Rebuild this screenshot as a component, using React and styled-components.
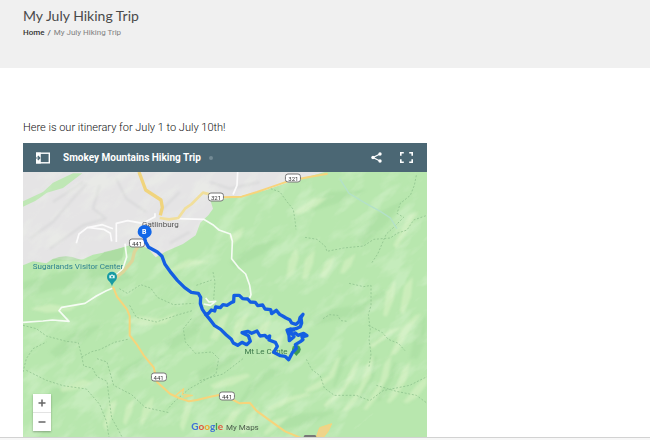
import React, { useState } from "react";
import styled, { createGlobalStyle } from "styled-components";

const MAP_W = 1212;
const MAP_H = 795;

const GlobalStyle = createGlobalStyle`
  * { box-sizing: border-box; }
  body {
    margin: 0;
    background: #fff;
    color: #3c3c3c;
    font-family: Roboto, "Liberation Sans", sans-serif;
  }
`;

const PageHeader = styled.header`
  background: #f0f0f0;
  padding: 8px 23px 27px;
`;

const PageTitle = styled.h1`
  margin: 0;
  font-family: Lato, "Open Sans", sans-serif;
  font-size: 14px;
  font-weight: 400;
  line-height: 16px;
  color: #4a4a4a;
`;

const Breadcrumb = styled.nav`
  display: flex;
  gap: 3px;
  padding-top: 1px;
  font-size: 8px;
  line-height: 16px;
  color: #808080;
`;

const HomeLink = styled.a`
  color: #333;
  font-weight: 500;
  text-decoration: none;
`;

const Slash = styled.span`
  color: #333;
`;

const Content = styled.main`
  display: grid;
  grid-template-columns: minmax(0, 101fr) minmax(0, 50fr);
  padding: 52px 23px 0;
`;

const Intro = styled.p`
  margin: 0;
  padding-bottom: 7px;
  font-size: 11px;
  font-weight: 300;
  line-height: 16px;
  color: #111;
`;

const Toolbar = styled.div`
  display: flex;
  align-items: center;
  height: 29px;
  padding: 0 14px 0 13px;
  background: #4b6774;
  color: #fff;
`;

const ToolButton = styled.button`
  display: flex;
  padding: 0;
  border: 0;
  background: none;
  color: inherit;
  cursor: pointer;
`;

const MapTitle = styled.h2`
  flex: 1;
  display: flex;
  align-items: center;
  gap: 8px;
  margin: 0 13px;
  font-size: 10px;
  font-weight: 700;
  line-height: 16px;
`;

const TitleDot = styled.span`
  width: 4px;
  height: 4px;
  border-radius: 50%;
  background: #738a94;
`;

const ToolActions = styled.div`
  display: flex;
  align-items: center;
  gap: 18px;
`;

const MapView = styled.div`
  position: relative;
  overflow: hidden;
  background: #b9e8af;
`;

const Terrain = styled.svg`
  display: block;
  width: 100%;
`;

const Overlay = styled.svg`
  position: absolute;
  inset: 0;
  width: 100%;
  height: 100%;
`;

const Place = styled.span`
  position: absolute;
  left: ${(prop) => (prop.$x / MAP_W) * 100}%;
  top: ${(prop) => (prop.$y / MAP_H) * 100}%;
  transform: translate(-50%, -50%);
  font-size: ${(prop) => prop.$size || 8}px;
  line-height: 12px;
  white-space: nowrap;
  color: ${(prop) => prop.$color};
`;

const Shield = styled(Place)`
  padding: 0 2px;
  border: 1px solid #777;
  border-radius: 3px;
  background: #fff;
  color: #333;
  font-size: 6px;
  line-height: 7px;
`;

const ZoomControl = styled.div`
  position: absolute;
  left: 10px;
  bottom: 6px;
  display: flex;
  flex-direction: column;
  background: #fff;
  box-shadow: 0 1px 2px rgba(0, 0, 0, 0.3);
`;

const ZoomButton = styled.button`
  display: flex;
  align-items: center;
  justify-content: center;
  width: 18px;
  height: 18px;
  padding: 0;
  border: 0;
  background: #fff;
  color: #666;
  cursor: pointer;

  & + & {
    height: 19px;
    border-top: 1px solid #e3e3e3;
  }
`;

const Attribution = styled.a`
  position: absolute;
  left: 50%;
  bottom: 2px;
  display: flex;
  align-items: baseline;
  gap: 3px;
  transform: translateX(-50%);
  font-size: 8px;
  line-height: 14px;
  white-space: nowrap;
  text-decoration: none;
  color: #4c5c4c;
`;

const GoogleWord = styled.span`
  font-family: Lato, sans-serif;
  font-size: 10px;
  font-weight: 700;
`;

const Letter = styled.span`
  color: ${(prop) => prop.$color};
`;

const BottomEdge = styled.footer`
  height: 3px;
  border-top: 1px solid #d2d2d2;
  background: #f7f7f7;
`;

const googleLetters = [
  ["G", "#3f72d6"],
  ["o", "#e0533f"],
  ["o", "#eba52d"],
  ["g", "#3f72d6"],
  ["l", "#3f9e52"],
  ["e", "#e0533f"],
];

const shields = [
  { x: 579, y: 75, label: "321" },
  { x: 811, y: 17, label: "321" },
  { x: 342, y: 213, label: "441" },
  { x: 407, y: 614, label: "441" },
  { x: 612, y: 671, label: "441" },
];

// light slopes facing north-west
const litRidges = [
  "M790 320l6-54 24-40 8 30-16 50z",
  "M836 322l10-60 30-30-6 44-18 44z",
  "M890 316l16-44 30-22-10 36-20 30z",
  "M950 304l14-38 34-22-14 38-20 22z",
  "M560 500l30-60 30-22-18 50-20 36z",
  "M624 510l14-60 40-30-22 60-18 32z",
  "M690 500l26-44 30-10-20 40-22 18z",
  "M735 560l20-60 30-18-16 44-20 32z",
  "M845 652l72-42 22-50 14-6-20 60-46 36-36 12z",
  "M900 700l60-54 30-66 20-20-18 60-42 52-40 34z",
  "M960 715l50-70 20-66 22-30-10 66-40 70-32 34z",
  "M1020 712l50-80 14-58 22-26-10 66-36 64-28 36z",
  "M1090 690l30-50 20-50 22-24-12 58-30 50-20 20z",
  "M1140 690l40-50 32-30v26l-30 40-30 18z",
  "M1100 550l36-80 40-40 20-6-36 50-40 72z",
  "M1080 430l10-70 28-36-6 60-20 50z",
  "M1130 420l14-80 26-26-6 60-22 52z",
  "M730 710l60-34 62-14 10 8-60 20-60 26z",
  "M560 640l48-22 64-14 10 8-54 28-56 10z",
  "M590 770l38-52 30-12-26 46-34 26z",
  "M650 780l24-50 36-30-20 50-30 34z",
  "M720 785l30-40 50-14-40 38-30 20z",
  "M240 760l18-66 24-12-8 36-24 60z",
  "M300 750l10-50 24-20-6 40-20 40z",
  "M350 752l12-50 30-30-4 38-30 50z",
  "M470 760l20-74 24-16-12 50-22 60z",
  "M1110 220l48-92 28-8-30 50-34 60z",
  "M20 410l62-14 56 10 42-18-38 28-72 6z",
  "M300 450l46-18 70 8 50-22-38 36-66 8z",
  "M430 296l66-34 70 6-60 14-60 20z",
  "M810 120l60-40 42-2-30 24-56 26z",
  "M620 190l44-26-10 30-26 26z",
  "M110 650l70-28 28 10-30 16-60 12z",
  "M1040 520l60-46 42-12-54 34-40 34z",
];

const shadeRidges = [
  "M0 330l110-30 160-24 60 40-92 28-128 6-110 26z",
  "M870 440l60-30 88-12 60-46 10 14-56 54-82 22-76 16z",
  "M930 640l24-80 18-14-14 50-24 52z",
  "M1000 690l34-70 20-68 8 0-8 62-36 64z",
  "M1060 690l30-70 24-50 8 4-14 50-34 60z",
  "M1160 560l20-100 30-30v70l-26 60z",
  "M640 700l40-60 60-50 40 6-56 34-66 66z",
  "M420 510l80-50 40-62 26 6-38 74-80 54z",
  "M80 540l70-60 90-24-60 52-78 50z",
  "M520 600l70-40 76-16-60 38-74 42z",
  "M620 270l70-50 80-20-50 46-84 42z",
  "M1000 200l60-74 82-42-50 70-72 68z",
  "M40 700l52-50 62-12-38 44-50 44z",
  "M280 600l72-42 80-8-64 40-80 30z",
  "M740 760l90-34 108-10-60 34-108 24z",
  "M850 100l70-40 110-6-70 34-92 30z",
];

// dotted hiking paths
const footpaths = [
  "M743 50l28 10 20 28 20 24 6 40 2 20",
  "M846 196l36 6 24 20 6 16 50-10 60-6 30-20 50-4 20-14 30-10 20-30 40-14 18-20-8-30 30-20-6-28",
  "M1180 10l-6 30-12 30-30 24-10 30 20 12-30 30-22 20-26 60-20 30",
  "M978 334l44 10 22-4 0 60-8 28 6 44-4 30 6 44-6 38",
  "M1036 460l40 20 20 22 30 12 20 22",
  "M0 460l40 10 30 22 60 16 36 4 10 40 6 30 26 6 14 26 30 14 10 80 4 30 16 28 26 50 6 49",
  "M0 600l10-40 20-30 40-20M10 595l60 30 50 16 70 10 40 46 20 50 8 48",
  "M176 555l30-16 24-6 44-22 44-10M222 560l30 10 20 70 54 28 40 38 72 16",
  "M289 350l24 14 40-26 30 10 20 28 48 22 60-4M320 400l20 36 60 14 60-20 48-14",
  "M505 440l-24 30 6 40 30 34 50-4 20 20-8 46-80 44-46 40-20 22",
  "M660 560l-60 46-70 20M850 562l16 30 26 20 12 36 30 22 66 0 40 16 40-30 80-16 60-30",
  "M900 440l20-12 24 2 10 16 20 2M1060 640l60 18 60 12 41 30",
  "M570 300l6 30-4 50 8 24M520 340l46-16",
];

const routePath =
  "M364 196L368 210L377 226L403 240L417 253L426 277L444 302L463 325L485 347L505 361L526 364L533 376L532 395L538 412L548 427L561 443L575 461L593 472L610 489L625 502L631 513L644 520L657 511L671 518L682 508L676 491L657 482L674 478L686 484L702 477L711 492L726 490L732 497L740 492L738 504L757 511L763 523L752 541L772 551L786 553L797 563L808 542L820 529L817 518L832 509L840 503L837 495L852 491L842 484L825 490L817 483L809 488L800 477L812 474L802 471L792 474L798 490L799 506L813 494";

const northLoop =
  "M548 427L557 424L565 414L575 417L578 405L592 407L600 398L612 400L626 391L632 389L633 370L649 370L659 380L674 381L682 390L697 391L704 401L719 399L726 411L743 413L746 425L760 415L770 427L779 432L789 438L800 443L806 453L819 457L828 449L831 437L840 427L834 437L836 453L832 464L819 470L803 472";

function PanelIcon() {
  return (
    <svg width="14" height="12" viewBox="0 0 14 12" aria-hidden="true">
      <rect x="0.7" y="1.2" width="12.6" height="9.6" fill="none" stroke="currentColor" strokeWidth="1.4" />
      <path d="M0 .5h4.8v11H0z" fill="currentColor" />
      <path d="M0 6h3.4M1.8 4l2 2-2 2" fill="none" stroke="#4b6774" strokeWidth="1.2" />
    </svg>
  );
}

function ShareIcon() {
  return (
    <svg width="11" height="11" viewBox="0 0 11 11" aria-hidden="true">
      <path d="M9 2L2 5.5 9 9" fill="none" stroke="currentColor" strokeWidth="1.2" />
      <circle cx="9" cy="2" r="1.7" fill="currentColor" />
      <circle cx="2" cy="5.5" r="1.7" fill="currentColor" />
      <circle cx="9" cy="9" r="1.7" fill="currentColor" />
    </svg>
  );
}

function FullscreenIcon() {
  return (
    <svg width="13" height="11" viewBox="0 0 13 11" aria-hidden="true">
      <path
        d="M.8 3.8v-3h3M9.2.8h3v3M12.2 7.2v3h-3M3.8 10.2h-3v-3"
        fill="none"
        stroke="currentColor"
        strokeWidth="1.6"
      />
    </svg>
  );
}

function TerrainLayer() {
  return (
    <Terrain viewBox={`0 0 ${MAP_W} ${MAP_H}`} aria-hidden="true">
      <defs>
        <filter id="relief" x="0" y="0" width="100%" height="100%">
          <feTurbulence type="fractalNoise" baseFrequency="0.014 0.034" numOctaves="4" seed="7" />
          <feColorMatrix values="0 0 0 0 .93  0 0 0 0 1  0 0 0 0 .86  4 0 0 0 -1.9" />
        </filter>
        <filter id="soft">
          <feGaussianBlur stdDeviation="3" />
        </filter>
        <clipPath id="frame">
          <rect width={MAP_W} height={MAP_H} />
        </clipPath>
      </defs>
      <g clipPath="url(#frame)">
        <rect width={MAP_W} height={MAP_H} fill="#b8e7ae" />
        <g filter="url(#soft)">
          {shadeRidges.map((d) => (
            <path key={d} d={d} fill="#a8dca0" opacity="0.55" />
          ))}
          {litRidges.map((d) => (
            <path key={d} d={d} fill="#cfefbe" opacity="0.8" />
          ))}
        </g>

        {/* town area */}
        <path
          d="M0 0H905L790 33L730 54L640 76L562 84L570 110L556 130L532 152L518 190L480 216L430 238L398 256L376 230L340 214L300 226L262 238L210 248L180 262L130 264L90 260L70 274L30 268L0 280Z"
          fill="#e5e4e5"
        />
        <g stroke="#dadadb" strokeWidth="7" fill="none" filter="url(#soft)">
          <path d="M20 200l70-50 60-70 40-44M80 230l100-70 70-20M230 40l-20 70 40 30M470 60l-60 60M500 180l-60 34M280 20l30 60 60 40M180 30l-90 60M560 30l60 20 90-20" />
        </g>
        <path d="M0 104V88L60 60L90 32L150 4H178L120 48L72 62L38 86Z" fill="#bfe7b5" />
        <path d="M88 262q40-18 80 0t76-22l60-14-8 40H84z" fill="#a8d99e" opacity="0.7" />
        <rect
          width={MAP_W}
          height={MAP_H}
          filter="url(#relief)"
          opacity="0.22"
          transform="rotate(-40 606 398) translate(-260 -260) scale(1.5)"
        />

        <g fill="none" stroke="#8cc08c" strokeWidth="3" strokeDasharray="6 5" opacity="0.75">
          {footpaths.map((d) => (
            <path key={d} d={d} />
          ))}
        </g>
        <path d="M950 20l28 44 50 30 44 24 30 20 20 32" fill="none" stroke="#b3e0c9" strokeWidth="4" />

        <g fill="none" stroke="#fff" strokeWidth="5" strokeLinejoin="round" opacity="0.85">
          <path d="M0 451l60-4 28-3 50 4-30-32 8-10 70-12 34-22 30-16 18-7" />
          <path d="M306 215l5 40-12 36-20 18" />
          <path d="M160 214l8-28 26-20 48 6 20 12 4 24M198 166l40-8 32 12M280 210v-56l34-8 46 8 36-20v-10" />
          <path d="M462 140l80 2 30 18 16 14 34 12 6 22-2 52 20 26 22 20 12 34 4 28-4 10" />
          <path d="M644 0l-2 40-12 28" />
          <path d="M548 378l10 12 20-2-16 12-20-4" />
        </g>

        <g fill="none" stroke="#ddd69a" strokeWidth="10" strokeLinejoin="round">
          <path d="M350 216l-16 24-6 26-28 34-26 20" />
          <path d="M348 0l20 54 46 30 4 22-6 24" stroke="#f0d47d" />
          <path d="M410 138l28 4 28-4 20-28 20-14 34-34 32 8" stroke="#f1df9b" strokeWidth="8" />
        </g>
        <g fill="none" stroke="#f7d47b" strokeWidth="6" strokeLinejoin="round">
          <path d="M600 76l56-2 46-14 40-14 52-18 60-12 60-11" />
          <path d="M270 344l12 30 30 38 8 20v58l22 28 20 32 30 36 10 44 40 36 26 12 30 10 24-4 40-10 30-6 28 10 30 16 30-2 20 24 36 26 50 36 60 25" />
          <path d="M456 672l26-22-4 18 30 2-26 6" strokeWidth="4" />
          <path d="M880 795l10-28 36-12-10 22-14 18" fill="#efd48a" strokeWidth="3" />
        </g>
        <rect x="842" y="789" width="38" height="10" rx="5" fill="#777" />
      </g>
    </Terrain>
  );
}

function RouteLayer() {
  return (
    <Overlay viewBox={`0 0 ${MAP_W} ${MAP_H}`} role="img" aria-label="Hiking route">
      <circle cx="820" cy="532" r="13" fill="#3f9c58" />
      <path d="M810 540l10 12 10-12z" fill="#3f9c58" />
      <g fill="none" stroke="#145fe2" strokeWidth="10" strokeLinejoin="round" strokeLinecap="round">
        <path d={routePath} />
        <path d={northLoop} />
      </g>
      <path d="M267 343c-3-15-15-16-15-29a15 15 0 0130 0c0 13-12 14-15 29z" fill="#179ba3" />
      <path d="M259 310h5l3-4 3 4h5v9h-16z" fill="#e8f8f7" />
      <circle cx="267" cy="314" r="3" fill="#179ba3" />
      <path d="M366 204c-5-8-22-10-22-25a21 20 0 0142 0c0 15-15 17-20 25z" fill="#1267e8" />
    </Overlay>
  );
}

const App = () => {
  const [panelOpen, setPanelOpen] = useState(false);

  return (
    <>
      <GlobalStyle />
      <PageHeader>
        <PageTitle>My July Hiking Trip</PageTitle>
        <Breadcrumb aria-label="Breadcrumb">
          <HomeLink href="#home">Home</HomeLink>
          <Slash>/</Slash>
          <span>My July Hiking Trip</span>
        </Breadcrumb>
      </PageHeader>

      <Content>
        <article>
          <Intro>Here is our itinerary for July 1 to July 10th!</Intro>
          <Toolbar>
            <ToolButton
              aria-label="Toggle legend"
              aria-pressed={panelOpen}
              onClick={() => setPanelOpen(!panelOpen)}
            >
              <PanelIcon />
            </ToolButton>
            <MapTitle>
              Smokey Mountains Hiking Trip
              <TitleDot />
            </MapTitle>
            <ToolActions>
              <ToolButton aria-label="Share">
                <ShareIcon />
              </ToolButton>
              <ToolButton aria-label="Full screen">
                <FullscreenIcon />
              </ToolButton>
            </ToolActions>
          </Toolbar>

          <MapView>
            <TerrainLayer />
            <Place $x={412} $y={160} $color="#555">Gatlinburg</Place>
            <Place $x={165} $y={284} $color="#2e8290">Sugarlands Visitor Center</Place>
            <Place $x={729} $y={540} $color="#3d7a4b">Mt Le Conte</Place>
            {shields.map((s) => (
              <Shield key={`${s.x}-${s.y}`} $x={s.x} $y={s.y}>
                {s.label}
              </Shield>
            ))}
            <RouteLayer />
            <Place as="b" $x={364} $y={180} $size={7} $color="#fff">B</Place>
            <ZoomControl>
              <ZoomButton aria-label="Zoom in">
                <svg width="8" height="8" viewBox="0 0 8 8">
                  <path d="M4 .5v7M.5 4h7" stroke="currentColor" strokeWidth="1.5" />
                </svg>
              </ZoomButton>
              <ZoomButton aria-label="Zoom out">
                <svg width="8" height="8" viewBox="0 0 8 8">
                  <path d="M.5 4h7" stroke="currentColor" strokeWidth="1.5" />
                </svg>
              </ZoomButton>
            </ZoomControl>
            <Attribution href="#my-maps">
              <GoogleWord>
                {googleLetters.map(([char, color], i) => (
                  <Letter key={i} $color={color}>{char}</Letter>
                ))}
              </GoogleWord>
              My Maps
            </Attribution>
          </MapView>
        </article>
      </Content>
      <BottomEdge />
    </>
  );
};

export default App;
